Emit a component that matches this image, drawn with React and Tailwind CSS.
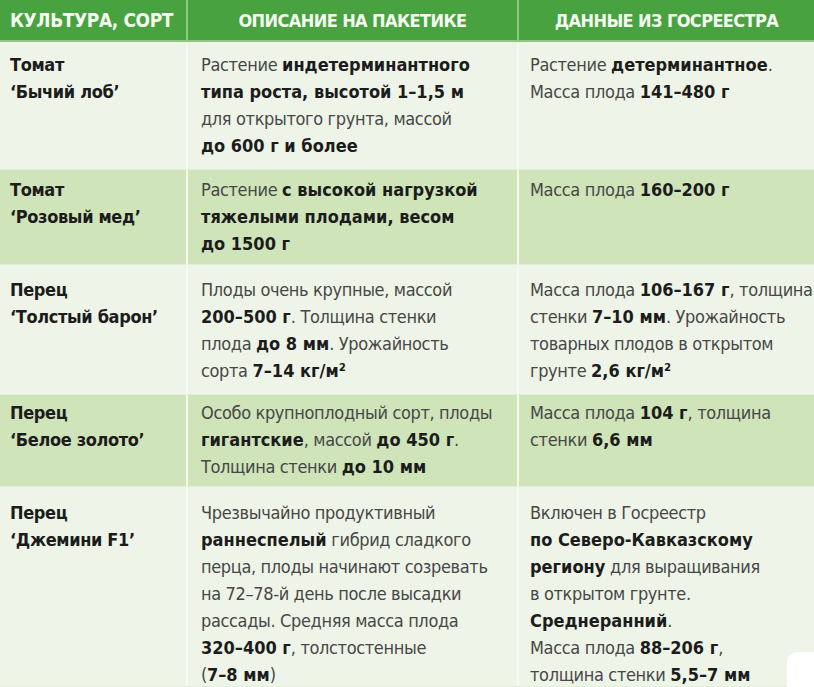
import React from "react";

const font = "font-['DejaVu_Sans_Condensed','Liberation_Sans_Narrow','Roboto_Condensed',Roboto,sans-serif]";

const rows = [
  {
    bg: "bg-[#eef5e8]",
    h: "h-[128px]",
    pt: "pt-[9px]",
    name: ["Томат", "‘Бычий лоб’"],
    desc: [
      <>Растение <b>индетерминантного</b></>,
      <b>типа роста, высотой 1–1,5 м</b>,
      <>для открытого грунта, массой</>,
      <b>до 600 г и более</b>,
    ],
    reg: [
      <>Растение <b>детерминантное</b>.</>,
      <>Масса плода <b>141–480 г</b></>,
    ],
  },
  {
    bg: "bg-[#cfe4b9]",
    h: "h-[95px]",
    pt: "pt-[6px]",
    name: ["Томат", "‘Розовый мед’"],
    desc: [
      <>Растение <b>с высокой нагрузкой</b></>,
      <b>тяжелыми плодами, весом</b>,
      <b>до 1500 г</b>,
    ],
    reg: [<>Масса плода <b>160–200 г</b></>],
  },
  {
    bg: "bg-[#eef5e8]",
    h: "h-[130px]",
    pt: "pt-[11px]",
    name: ["Перец", "‘Толстый барон’"],
    desc: [
      <>Плоды очень крупные, массой</>,
      <><b>200–500 г</b>. Толщина стенки</>,
      <>плода <b>до 8 мм</b>. Урожайность</>,
      <>сорта <b>7–14 кг/м²</b></>,
    ],
    reg: [
      <>Масса плода <b>106–167 г</b>, толщина</>,
      <>стенки <b>7–10 мм</b>. Урожайность</>,
      <>товарных плодов в открытом</>,
      <>грунте <b>2,6 кг/м²</b></>,
    ],
  },
  {
    bg: "bg-[#cfe4b9]",
    h: "h-[92px]",
    pt: "pt-[4px]",
    name: ["Перец", "‘Белое золото’"],
    desc: [
      <>Особо крупноплодный сорт, плоды</>,
      <><b>гигантские</b>, массой <b>до 450 г</b>.</>,
      <>Толщина стенки <b>до 10 мм</b></>,
    ],
    reg: [
      <>Масса плода <b>104 г</b>, толщина</>,
      <>стенки <b>6,6 мм</b></>,
    ],
  },
  {
    bg: "bg-[#eef5e8]",
    h: "h-[200px]",
    pt: "pt-[12px]",
    name: ["Перец", "‘Джемини F1’"],
    desc: [
      <>Чрезвычайно продуктивный</>,
      <><b>раннеспелый</b> гибрид сладкого</>,
      <>перца, плоды начинают созревать</>,
      <>на 72–78-й день после высадки</>,
      <>рассады. Средняя масса плода</>,
      <><b>320–400 г</b>, толстостенные</>,
      <>(<b>7–8 мм</b>)</>,
    ],
    reg: [
      <>Включен в Госреестр</>,
      <b>по Северо-Кавказскому</b>,
      <><b>региону</b> для выращивания</>,
      <>в открытом грунте.</>,
      <><b>Среднеранний</b>.</>,
      <>Масса плода <b>88–206 г</b>,</>,
      <>толщина стенки <b>5,5–7 мм</b></>,
    ],
  },
];

function Lines({ items }) {
  return (
    <div className="whitespace-nowrap [&_b]:text-[#1c1c1c] [&_b]:font-bold [&_b]:tracking-normal">
      {items.map((l, i) => (
        <div key={i}>{l}</div>
      ))}
    </div>
  );
}

export default function App() {
  return (
    <div className={`relative w-[814px] h-[687px] overflow-hidden bg-[#eef5e8] ${font} text-[18px] tracking-[-0.35px] leading-[27px] text-[#474747]`}>
      <div className="grid grid-cols-[186px_331px_1fr] h-[42px] bg-[#48a23f] text-[#f4fbef] font-bold uppercase border-b-2 border-[#8fc77c]">
        <div className="flex items-center pl-[10px] text-[19px] tracking-[-0.4px]">Культура, сорт</div>
        <div className="flex items-center justify-center border-l-2 border-[#8fcb7f] text-[18px] tracking-[-0.6px]">Описание на пакетике</div>
        <div className="flex items-center justify-center border-l-2 border-[#8fcb7f] text-[18px] tracking-[-0.6px]">Данные из госреестра</div>
      </div>
      {rows.map((r, i) => (
        <div
          key={i}
          className={`grid grid-cols-[186px_331px_1fr] ${r.h} ${r.bg} border-b border-[#e4efdb] overflow-hidden`}
        >
          <div className={`pl-[10px] ${r.pt} font-bold text-[#1c1c1c]`}>
            {r.name.map((n, j) => (
              <div key={j}>{n}</div>
            ))}
          </div>
          <div className={`pl-[13px] ${r.pt} border-l-2 border-[#f7faf3]`}>
            <Lines items={r.desc} />
          </div>
          <div className={`pl-[11px] ${r.pt} border-l-2 border-[#f7faf3] overflow-hidden`}>
            <Lines items={r.reg} />
          </div>
        </div>
      ))}
      <div className="absolute right-0 bottom-0 w-[27px] h-[35px] bg-white rounded-tl-[10px]" />
    </div>
  );
}
